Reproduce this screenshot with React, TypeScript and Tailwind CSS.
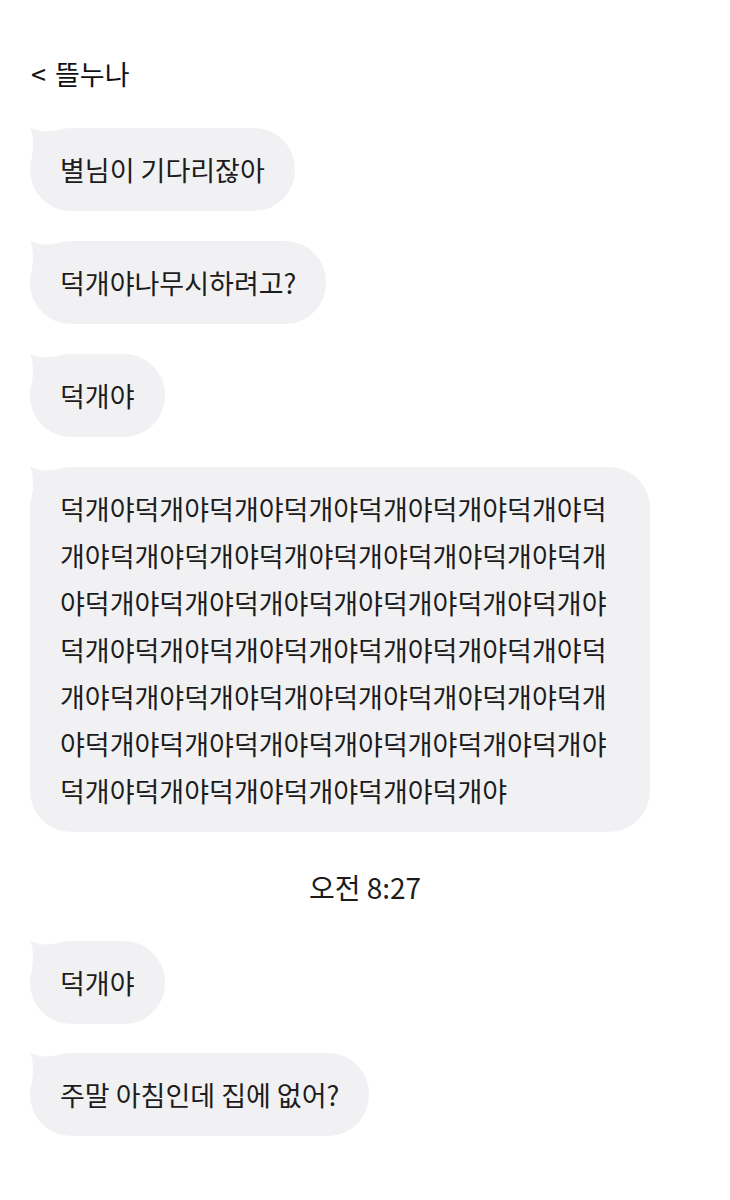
const font = { fontFamily: '"Noto Sans CJK KR", "Noto Sans", sans-serif' };

function Tail() {
  return (
    <svg
      className="absolute left-0 top-0"
      width="30"
      height="30"
      viewBox="0 0 30 30"
    >
      <path d="M0 -1 Q 10 6 28 2 L 28 28 L 2 28 Q 5 12 0 -1 Z" fill="#f1f1f3" />
    </svg>
  );
}

function Bubble({ children }: { children: React.ReactNode }) {
  return (
    <div className="relative self-start">
      <Tail />
      <div className="rounded-[41px] bg-[#f1f1f3] px-[30px] py-[18px] text-[27px] leading-[47px] text-[#1c1c1c]">
        {children}
      </div>
    </div>
  );
}

const longLines = [
  '덕개야덕개야덕개야덕개야덕개야덕개야덕개야덕',
  '개야덕개야덕개야덕개야덕개야덕개야덕개야덕개',
  '야덕개야덕개야덕개야덕개야덕개야덕개야덕개야',
  '덕개야덕개야덕개야덕개야덕개야덕개야덕개야덕',
  '개야덕개야덕개야덕개야덕개야덕개야덕개야덕개',
  '야덕개야덕개야덕개야덕개야덕개야덕개야덕개야',
  '덕개야덕개야덕개야덕개야덕개야덕개야',
];

export default function App() {
  return (
    <div className="min-h-[1200px] w-[730px] bg-white" style={font}>
      {/* Header */}
      <div className="flex items-center gap-[9px] px-[31px] pt-[56px] text-[27px] leading-[36px] text-[#111]">
        <span>&lt;</span>
        <span>뜰누나</span>
      </div>

      {/* Messages */}
      <div className="flex flex-col gap-[30px] px-[30px] pt-[36px]">
        <Bubble>별님이 기다리잖아</Bubble>
        <Bubble>덕개야나무시하려고?</Bubble>
        <Bubble>덕개야</Bubble>
        <div className="relative w-[620px]">
          <Tail />
          <div className="rounded-[41px] bg-[#f1f1f3] px-[30px] py-[18px] text-[27px] leading-[47px] text-[#1c1c1c]">
            {longLines.map((line, i) => (
              <div key={i} className="whitespace-nowrap">
                {line}
              </div>
            ))}
          </div>
        </div>
      </div>

      <div className="pt-[36px] pb-[35px] text-center text-[28px] leading-[38px] text-[#1c1c1c]">
        오전 8:27
      </div>

      <div className="flex flex-col gap-[29px] px-[30px]">
        <Bubble>덕개야</Bubble>
        <Bubble>주말 아침인데 집에 없어?</Bubble>
      </div>
    </div>
  );
}
